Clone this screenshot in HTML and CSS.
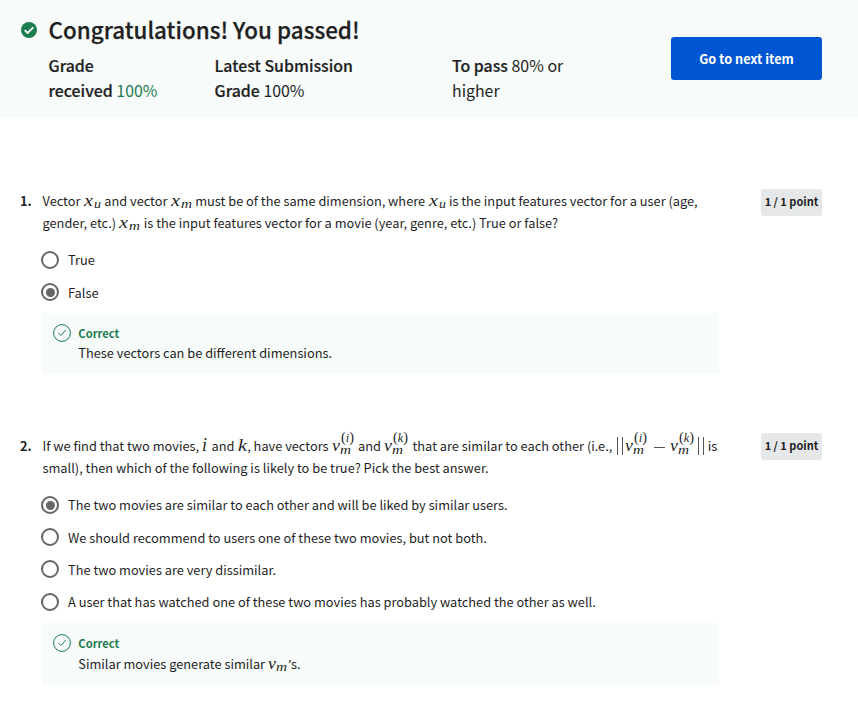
FILE: index.html
```html
<!DOCTYPE html>
<html lang="en">
<head>
<meta charset="utf-8">
<title>Quiz results</title>
<link rel="stylesheet" href="styles.css">
</head>
<body>
<header class="result">
  <svg class="passed" viewBox="0 0 16 16"><circle cx="8" cy="8" r="8"/><path d="M3.7 8.1 6.6 11l5.7-5.7"/></svg>
  <div class="summary">
    <h1>Congratulations! You passed!</h1>
    <div class="stats">
      <p><b>Grade<br>received</b> <span class="green">100%</span></p>
      <p><b>Latest Submission<br>Grade</b> 100%</p>
      <p><b>To pass</b> 80% or<br>higher</p>
    </div>
  </div>
  <button class="next">Go to next item</button>
</header>
<main>
  <section class="question">
    <div class="number">1.</div>
    <div class="content">
      <div class="prompt">
        <div class="line">Vector <svg class="math" width="17" height="22"><text x="0" y="17" font-size="17" textLength="9" lengthAdjust="spacingAndGlyphs">x</text><text x="10" y="19" font-size="12" textLength="7" lengthAdjust="spacingAndGlyphs">u</text></svg> and vector <svg class="math" width="21" height="22"><text x="0" y="17" font-size="17" textLength="9" lengthAdjust="spacingAndGlyphs">x</text><text x="10" y="19" font-size="12" textLength="11" lengthAdjust="spacingAndGlyphs">m</text></svg> must be of the same dimension, where <svg class="math" width="17" height="22"><text x="0" y="17" font-size="17" textLength="9" lengthAdjust="spacingAndGlyphs">x</text><text x="10" y="19" font-size="12" textLength="7" lengthAdjust="spacingAndGlyphs">u</text></svg> is the input features vector for a user (age,</div>
        <div class="line">gender, etc.) <svg class="math" width="21" height="22"><text x="0" y="17" font-size="17" textLength="9" lengthAdjust="spacingAndGlyphs">x</text><text x="10" y="19" font-size="12" textLength="11" lengthAdjust="spacingAndGlyphs">m</text></svg> is the input features vector for a movie (year, genre, etc.) True or false?</div>
      </div>
      <div class="options">
        <div class="option"><i class="radio"></i><span>True</span></div>
        <div class="option"><i class="radio on"></i><span>False</span></div>
      </div>
      <div class="feedback">
        <svg class="check" viewBox="0 0 18 18"><circle cx="9" cy="9" r="8.4"/><path d="m5.4 9 2.5 2.5L12.8 6"/></svg>
        <div><div class="correct">Correct</div><div class="explain">These vectors can be different dimensions.</div></div>
      </div>
    </div>
    <div class="points">1 / 1 point</div>
  </section>
  <section class="question second">
    <div class="number">2.</div>
    <div class="content">
      <div class="prompt">
        <div class="line">If we find that two movies, <svg class="math" width="6" height="22"><text x="0" y="17" font-size="18" textLength="5" lengthAdjust="spacingAndGlyphs">i</text></svg> and <svg class="math" width="9" height="22"><text x="0" y="17" font-size="17" textLength="9" lengthAdjust="spacingAndGlyphs">k</text></svg>, have vectors <svg class="math" width="23" height="22"><text x="0" y="17" font-size="17" textLength="8" lengthAdjust="spacingAndGlyphs">v</text><text x="8" y="20" font-size="12" textLength="11" lengthAdjust="spacingAndGlyphs">m</text><text x="9" y="8" font-size="12" textLength="13" lengthAdjust="spacingAndGlyphs"><tspan class="up">(</tspan>i<tspan class="up">)</tspan></text></svg> and <svg class="math" width="25" height="22"><text x="0" y="17" font-size="17" textLength="8" lengthAdjust="spacingAndGlyphs">v</text><text x="8" y="20" font-size="12" textLength="11" lengthAdjust="spacingAndGlyphs">m</text><text x="9" y="8" font-size="12" textLength="15" lengthAdjust="spacingAndGlyphs"><tspan class="up">(</tspan>k<tspan class="up">)</tspan></text></svg> that are similar to each other (i.e., <svg class="math" width="89" height="22"><path d="M1.5 3v18M6.5 3v18M82.500 3v18M87.500 3v18M38 13.500h11"/><text x="9" y="17" font-size="17" textLength="8" lengthAdjust="spacingAndGlyphs">v</text><text x="17" y="20" font-size="12" textLength="11" lengthAdjust="spacingAndGlyphs">m</text><text x="18" y="8" font-size="12" textLength="13" lengthAdjust="spacingAndGlyphs"><tspan class="up">(</tspan>i<tspan class="up">)</tspan></text><text x="54" y="17" font-size="17" textLength="8" lengthAdjust="spacingAndGlyphs">v</text><text x="62" y="20" font-size="12" textLength="11" lengthAdjust="spacingAndGlyphs">m</text><text x="63" y="8" font-size="12" textLength="15" lengthAdjust="spacingAndGlyphs"><tspan class="up">(</tspan>k<tspan class="up">)</tspan></text></svg> is</div>
        <div class="line">small), then which of the following is likely to be true? Pick the best answer.</div>
      </div>
      <div class="options">
        <div class="option"><i class="radio on"></i><span>The two movies are similar to each other and will be liked by similar users.</span></div>
        <div class="option"><i class="radio"></i><span>We should recommend to users one of these two movies, but not both.</span></div>
        <div class="option"><i class="radio"></i><span>The two movies are very dissimilar.</span></div>
        <div class="option"><i class="radio"></i><span>A user that has watched one of these two movies has probably watched the other as well.</span></div>
      </div>
      <div class="feedback">
        <svg class="check" viewBox="0 0 18 18"><circle cx="9" cy="9" r="8.4"/><path d="m5.4 9 2.5 2.5L12.8 6"/></svg>
        <div><div class="correct">Correct</div><div class="explain">Similar movies generate similar <svg class="math" width="20" height="22"><text x="0" y="17" font-size="17" textLength="8" lengthAdjust="spacingAndGlyphs">v</text><text x="8" y="19" font-size="12" textLength="11" lengthAdjust="spacingAndGlyphs">m</text></svg><span class="quote">’</span>s.</div></div>
      </div>
    </div>
    <div class="points">1 / 1 point</div>
  </section>
</main>
</body>
</html>
```
FILE: styles.css
```css
* { box-sizing: border-box; }
body { margin: 0; background: #fff; color: #1f1f1f; font: 12.8px/22px "Noto Sans CJK SC", "Noto Sans", sans-serif; }
h1, p { margin: 0; }
.result { display: flex; height: 118px; padding: 0 36px 0 21px; background: #f7fbfa; }
.passed { width: 16px; height: 16px; margin-top: 22px; flex: none; }
.passed circle { fill: #1d7c50; }
.passed path { fill: none; stroke: #fff; stroke-width: 1.8; }
.summary { margin: 12px 0 0 11.500px; flex: 1; white-space: nowrap; }
h1 { font-size: 22.400px; line-height: 34px; font-weight: 500; -webkit-text-stroke: .25px #1f1f1f; }
.stats { display: grid; grid-template-columns: 166px 237.500px 1fr; margin-top: 7px; font-size: 15.900px; line-height: 25px; }
.stats b { font-weight: 500; -webkit-text-stroke: .2px #1f1f1f; }
.green { color: #1d7c50; }
.next { width: 151px; height: 43px; margin-top: 37px; border: 0; border-radius: 3px; padding: 1px 0 0; background: #0056d2; color: #fff; font: bold 12.700px/22px "Noto Sans CJK SC", "Noto Sans", sans-serif; }
main { padding: 71px 36px 0 20px; }
.question { display: flex; align-items: flex-start; }
.second { margin-top: 59px; }
.number { width: 22px; font-weight: bold; line-height: 24px; }
.second .number { padding-top: 1px; }
.content { width: 677px; }
.prompt { padding: 0 0 1px .5px; white-space: nowrap; }
.second .prompt { padding: 1px 0 0 .5px; }
.line { height: 22px; }
.second .line:first-child { height: 23.600px; }
.math { vertical-align: -5px; height: 22px; margin: 0 .5px; overflow: visible; fill: #1f1f1f; font-family: "Liberation Serif", "Times New Roman", serif; font-style: italic; }
.second .math { margin: 0 .4px; }
.math path { stroke: #555; stroke-width: 1; fill: none; }
.up { font-style: normal; font-size: 14px; }
.options { padding-top: 9.500px; }
.option { height: 32.500px; padding: 5px 0; display: flex; align-items: center; gap: 9px; white-space: nowrap; }
.second .option { height: 32.300px; }
.option span { padding-top: 1px; }
.radio { width: 18px; height: 18px; margin-left: -1px; border: 2px solid #666; border-radius: 50%; flex: none; padding: 2.500px; }
.on { background: #666 content-box; }
.feedback { display: flex; gap: 7.300px; height: 61px; padding: 11px; margin-top: 4px; background: #f7fbfa; }
.second .feedback { height: 62px; margin-top: 5px; }
.check { width: 18px; height: 18px; fill: none; stroke: #1d7c50; stroke-width: 1; }
.correct { height: 18px; color: #1d7c50; font-size: 11.200px; font-weight: bold; line-height: 19px; }
.explain { line-height: 22px; white-space: nowrap; }
.quote { font-family: "Noto Sans", sans-serif; }
.points { width: 61px; height: 27px; margin-left: 42px; background: #e5e7e8; border-radius: 3px; text-align: center; font-size: 11px; font-weight: bold; line-height: 25px; white-space: nowrap; }
```
